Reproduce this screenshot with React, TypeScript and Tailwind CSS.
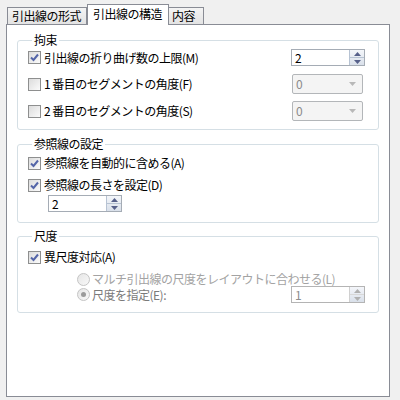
import React from 'react';

const font = "font-['Noto_Sans_CJK_JP',sans-serif]";

const CheckBox: React.FC<{ checked?: boolean }> = ({ checked }) => (
  <div className="w-[13px] h-[13px] border border-[#8e8f8f] bg-gradient-to-br from-[#dcdcdc] to-[#fbfbfb] flex items-center justify-center shrink-0">
    {checked && (
      <svg width="9" height="9" viewBox="0 0 9 9">
        <path d="M1 4.5 L3.5 7 L8 1.5" stroke="#5465a8" strokeWidth="2" fill="none" />
      </svg>
    )}
  </div>
);

const Radio: React.FC<{ selected?: boolean }> = ({ selected }) => (
  <div className="w-[13px] h-[13px] rounded-full border border-[#c4c4c4] bg-gradient-to-br from-[#e6e6e6] to-[#f8f8f8] flex items-center justify-center shrink-0">
    {selected && <div className="w-[5px] h-[5px] rounded-full bg-[#9a9a9a]" />}
  </div>
);

const Spinner: React.FC<{ value: string; disabled?: boolean }> = ({ value, disabled }) => (
  <div className={`w-[74px] h-[17px] border ${disabled ? 'border-[#b4b4b4] text-[#8d8d8d]' : 'border-[#a5acb5] text-black'} bg-white flex items-stretch`}>
    <div className="flex-1 pl-[3px] text-[12px] leading-[15px]">{value}</div>
    <div className={`w-[15px] border-l ${disabled ? 'border-[#d0d0d0]' : 'border-[#b7c3d3]'} flex flex-col bg-gradient-to-b from-[#f4f6fa] to-[#d9e0ea]`}>
      <div className="flex-1 flex items-center justify-center">
        <svg width="7" height="4" viewBox="0 0 7 4"><path d="M0 4 L3.5 0 L7 4 Z" fill={disabled ? '#b0b0b0' : '#56608a'} /></svg>
      </div>
      <div className={`h-px ${disabled ? 'bg-[#d8d8d8]' : 'bg-[#b7c3d3]'}`} />
      <div className="flex-1 flex items-center justify-center">
        <svg width="7" height="4" viewBox="0 0 7 4"><path d="M0 0 L3.5 4 L7 0 Z" fill={disabled ? '#b0b0b0' : '#56608a'} /></svg>
      </div>
    </div>
  </div>
);

const Combo: React.FC<{ value: string }> = ({ value }) => (
  <div className="w-[71px] h-[20px] rounded-[2px] border border-[#b3b6b9] bg-[#f4f4f4] flex items-center">
    <div className="flex-1 pl-[3px] text-[12px] leading-[14px] text-[#8a8a8a]">{value}</div>
    <svg className="mr-[6px]" width="7" height="4" viewBox="0 0 7 4"><path d="M0 0 L3.5 4 L7 0 Z" fill="#b8b8b8" /></svg>
  </div>
);

const Group: React.FC<{ title: string; className?: string; children: React.ReactNode }> = ({ title, className = '', children }) => (
  <fieldset className={`border border-[#d5dfe5] rounded-[3px] pl-[10px] pr-[13px] ${className}`}>
    <legend className="ml-[4px] px-[2px] text-[12px] leading-[14px]">{title}</legend>
    {children}
  </fieldset>
);

export default function App() {
  return (
    <div className={`w-[400px] h-[400px] bg-[#f0f0f0] pl-[6px] pt-[4px] flex flex-col ${font} text-[12px] tracking-[-0.5px] text-black`}>
      {/* Tabs */}
      <div className="flex items-end h-[20px] pl-[1px]">
        <div className="w-[80px] h-[17px] border border-b-0 border-[#898c95] bg-gradient-to-b from-[#f4f4f4] to-[#e3e3e3] pl-[4px] leading-[15px]">
          引出線の形式
        </div>
        <div className="w-[82px] h-[21px] -mb-px relative z-10 border border-b-0 border-[#898c95] bg-white pl-[5px] leading-[17px]">
          引出線の構造
        </div>
        <div className="w-[35px] h-[17px] border border-b-0 border-l-0 border-[#898c95] bg-gradient-to-b from-[#f4f4f4] to-[#e3e3e3] pl-[3px] leading-[15px]">
          内容
        </div>
      </div>

      {/* Panel */}
      <div className="w-[384px] h-[373px] border border-[#898c95] bg-white pl-[10px] pr-[10px] pt-[8px]">
        <Group title="拘束" className="pb-[8px]">
          <div className="flex items-center justify-between h-[17px] mt-[2px]">
            <div className="flex items-center gap-[3px]">
              <CheckBox checked />
              <span>引出線の折り曲げ数の上限(M)</span>
            </div>
            <Spinner value="2" />
          </div>
          <div className="flex items-center justify-between h-[20px] mt-[8px]">
            <div className="flex items-center gap-[3px]">
              <CheckBox />
              <span>1 番目のセグメントの角度(F)</span>
            </div>
            <div className="mr-[2px]"><Combo value="0" /></div>
          </div>
          <div className="flex items-center justify-between h-[20px] mt-[7px]">
            <div className="flex items-center gap-[3px]">
              <CheckBox />
              <span>2 番目のセグメントの角度(S)</span>
            </div>
            <div className="mr-[2px]"><Combo value="0" /></div>
          </div>
        </Group>

        <Group title="参照線の設定" className="mt-[7px] pb-[10px]">
          <div className="flex items-center gap-[3px] h-[14px] mt-[5px]">
            <CheckBox checked />
            <span>参照線を自動的に含める(A)</span>
          </div>
          <div className="flex items-center gap-[3px] h-[14px] mt-[8px]">
            <CheckBox checked />
            <span>参照線の長さを設定(D)</span>
          </div>
          <div className="mt-[3px] pl-[20px]">
            <Spinner value="2" />
          </div>
        </Group>

        <Group title="尺度" className="mt-[6px] pb-[9px]">
          <div className="flex items-center gap-[3px] h-[14px] mt-[7px]">
            <CheckBox checked />
            <span>異尺度対応(A)</span>
          </div>
          <div className="flex items-center gap-[2px] h-[14px] mt-[8px] pl-[49px] text-[#a3a3a3]">
            <Radio />
            <span>マルチ引出線の尺度をレイアウトに合わせる(L)</span>
          </div>
          <div className="flex items-center justify-between h-[17px] pl-[49px]">
            <div className="flex items-center gap-[2px] text-[#7a7a7a]">
              <Radio selected />
              <span>尺度を指定(E):</span>
            </div>
            <Spinner value="1" disabled />
          </div>
        </Group>
      </div>
    </div>
  );
}
